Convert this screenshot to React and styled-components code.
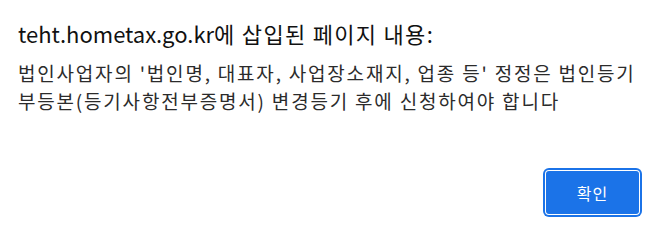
import React from "react";
import styled, { createGlobalStyle } from "styled-components";

const Global = createGlobalStyle`
  html, body { margin: 0; padding: 0; background: #fff; }
  body { font-family: "Noto Sans CJK KR", "Noto Sans", sans-serif; }
`;

const Dialog = styled.div`
  width: 649px;
  height: 231px;
  box-sizing: border-box;
  padding: 18px 7px 0 18px;
  display: flex;
  flex-direction: column;
`;

const Title = styled.h1`
  margin: 0;
  font-size: 22px;
  font-weight: 400;
  line-height: 30px;
  color: #111;
  letter-spacing: 1.3px;
  white-space: nowrap;
`;

const Host = styled.span`
  letter-spacing: 0;
`;

const Message = styled.p`
  margin: 11px 0 0;
  font-size: 19px;
  line-height: 28px;
  color: #2b2b2b;
  letter-spacing: 1.8px;
  white-space: nowrap;
`;

const Footer = styled.div`
  margin-top: auto;
  display: flex;
  justify-content: flex-end;
  padding: 0 3px 17px 0;
`;

const Button = styled.button`
  width: 93px;
  height: 43px;
  border: none;
  border-radius: 3px;
  background: #1b73e8;
  color: #fff;
  font-family: inherit;
  font-size: 16px;
  letter-spacing: 1px;
  box-shadow: 0 0 0 1px #fff, 0 0 0 3px #1b73e8;
  cursor: pointer;
`;

export default function App() {
  return (
    <>
      <Global />
      <Dialog>
        <Title>
          <Host>teht.hometax.go.kr</Host>에 삽입된 페이지 내용:
        </Title>
        <Message>
          법인사업자의 '법인명, 대표자, 사업장소재지, 업종 등' 정정은 법인등기
          <br />
          부등본(등기사항전부증명서) 변경등기 후에 신청하여야 합니다
        </Message>
        <Footer>
          <Button>확인</Button>
        </Footer>
      </Dialog>
    </>
  );
}
